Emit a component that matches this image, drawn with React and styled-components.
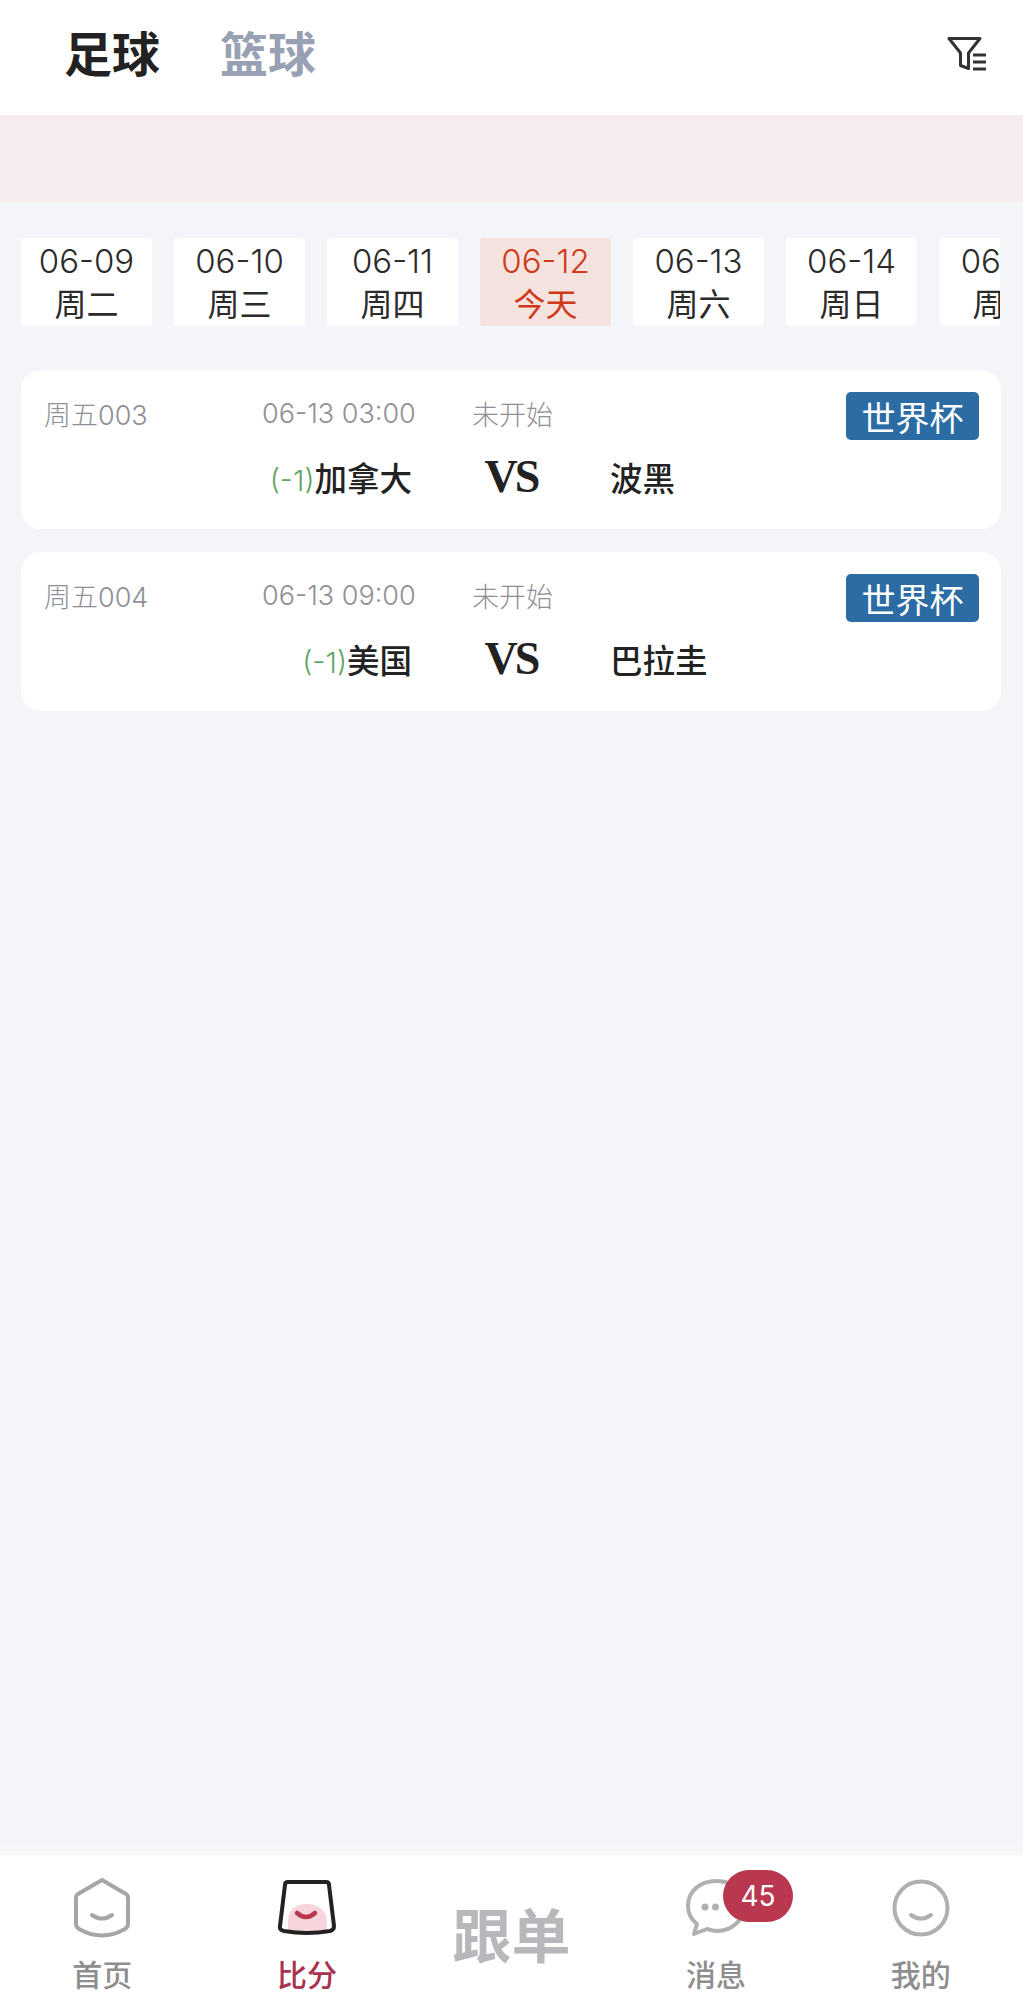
import React from 'react'
import styled, { createGlobalStyle } from 'styled-components'

const GlobalStyle = createGlobalStyle`
  html, body { margin: 0; padding: 0; background: #f3f5f9; }
  * { box-sizing: border-box; }
  body { font-family: "Inter", "Noto Sans CJK SC", sans-serif; }
`

const dates = [
    { day: '06-09', week: '周二' },
    { day: '06-10', week: '周三' },
    { day: '06-11', week: '周四' },
    { day: '06-12', week: '今天', active: true },
    { day: '06-13', week: '周六' },
    { day: '06-14', week: '周日' },
    { day: '06-15', week: '周一' },
]

const matches = [
    { id: '周五003', time: '06-13 03:00', home: '加拿大', away: '波黑' },
    { id: '周五004', time: '06-13 09:00', home: '美国', away: '巴拉圭' },
]

const FilterIcon = () => (
    <svg width="40" height="36" viewBox="0 0 40 36" fill="none" stroke="#333" strokeWidth="3">
        <path d="M2 2.5H33L21.5 17V32.5L13.5 29.5V17Z" strokeLinejoin="round" />
        <path d="M26 19H39M26 26H39M26 33H39" />
    </svg>
)

const HomeIcon = () => (
    <svg width="58" height="62" viewBox="0 0 58 62" fill="none" stroke="#a6a6a6" strokeWidth="4" strokeLinecap="round" strokeLinejoin="round">
        <path d="M29 3L53 17Q55 18 55 21V47Q55 50 52 52Q29 65 6 52Q3 50 3 47V21Q3 18 5 17Z" />
        <path d="M19 38Q29 45 39 38" />
    </svg>
)

const ScoreIcon = () => (
    <svg width="60" height="56" viewBox="0 0 60 56" fill="none">
        <path d="M11 40C11 30 19 24 30 24C41 24 50 30 50 42L50 50Q30 54 11 50Z" fill="#f6d5dc" />
        <path d="M8 5Q8 2 11 2H49Q52 2 52 5L57 46Q57 50 53 51Q30 55 7 51Q2 50 3 46Z" stroke="#222" strokeWidth="4" strokeLinejoin="round" />
        <path d="M20 33Q29 41 38 33" stroke="#b93850" strokeWidth="4.5" strokeLinecap="round" />
    </svg>
)

const ChatIcon = () => (
    <svg width="60" height="58" viewBox="0 0 60 58" fill="none" stroke="#b0b0b0" strokeWidth="4" strokeLinecap="round" strokeLinejoin="round">
        <path d="M31 2C14 2 2 12 2 27C2 35 6 41 11 45L8 55L21 50C24 51 27 52 31 52C46 52 58 41 58 27C58 12 46 2 31 2Z" />
        <circle cx="19" cy="28" r="3.5" fill="#b0b0b0" stroke="none" />
        <circle cx="29.5" cy="28" r="3.5" fill="#b0b0b0" stroke="none" />
    </svg>
)

const MineIcon = () => (
    <svg width="58" height="58" viewBox="0 0 58 58" fill="none" stroke="#b0b0b0" strokeWidth="4" strokeLinecap="round">
        <circle cx="29" cy="29" r="26.5" />
        <path d="M19 36Q29 43 39 36" />
    </svg>
)

const App = () => {
    return (
        <Page>
            <GlobalStyle />
            <Header>
                <SportTab $active>足球</SportTab>
                <SportTab>篮球</SportTab>
                <FilterButton><FilterIcon /></FilterButton>
            </Header>
            <Notice />
            <Content>
                <DateStrip>
                    {dates.map((item) => (
                        <DateCell key={item.day} $active={item.active}>
                            <DayText>{item.day}</DayText>
                            <span>{item.week}</span>
                        </DateCell>
                    ))}
                </DateStrip>
                <MatchList>
                    {matches.map((match) => (
                        <MatchCard key={match.id}>
                            <MetaRow>
                                <MetaText>{match.id}</MetaText>
                                <MetaText>{match.time}</MetaText>
                                <MetaText>未开始</MetaText>
                                <League>世界杯</League>
                            </MetaRow>
                            <TeamRow>
                                <HomeTeam><Handicap>(-1)</Handicap>{match.home}</HomeTeam>
                                <Versus>VS</Versus>
                                <AwayTeam>{match.away}</AwayTeam>
                            </TeamRow>
                        </MatchCard>
                    ))}
                </MatchList>
            </Content>
            <Fade />
            <TabBar>
                <TabItem>
                    <IconSlot><HomeIcon /></IconSlot>
                    <TabLabel>首页</TabLabel>
                </TabItem>
                <TabItem>
                    <IconSlot><ScoreIcon /></IconSlot>
                    <TabLabel $active>比分</TabLabel>
                </TabItem>
                <FollowItem>跟单</FollowItem>
                <TabItem>
                    <IconSlot>
                        <ChatIcon />
                        <Badge>45</Badge>
                    </IconSlot>
                    <TabLabel>消息</TabLabel>
                </TabItem>
                <TabItem>
                    <IconSlot><MineIcon /></IconSlot>
                    <TabLabel>我的</TabLabel>
                </TabItem>
            </TabBar>
        </Page>
    )
}

const Page = styled.div`
    display: flex;
    flex-direction: column;
    width: 1023px;
    height: 2000px;
    overflow: hidden;
    background: #f3f5f9;
`

const Header = styled.div`
    display: flex;
    align-items: center;
    gap: 60px;
    height: 115px;
    padding: 0 36px 5px 64px;
    background: #fff;
`

const SportTab = styled.div`
    font-size: 48px;
    font-weight: 700;
    line-height: 1;
    color: ${(p) => (p.$active ? '#222' : '#98a1b3')};
`

const FilterButton = styled.div`
    display: flex;
    margin-left: auto;
    margin-top: -3px;
`

const Notice = styled.div`
    height: 87px;
    background: #f6ebed;
`

const Content = styled.div`
    flex: 1;
    padding-top: 36px;
`

const DateStrip = styled.div`
    display: flex;
    gap: 22px;
    margin: 0 23px 0 21px;
    overflow: hidden;
`

const DateCell = styled.div`
    display: flex;
    flex-direction: column;
    align-items: center;
    flex: 0 0 131px;
    height: 88px;
    padding-top: 1px;
    border-radius: 3px;
    font-size: 32px;
    line-height: 44px;
    color: ${(p) => (p.$active ? '#d03a1a' : '#2b2b2b')};
    background: ${(p) => (p.$active ? '#f5e3e0' : '#fff')};
`

const DayText = styled.span`
    font-size: 33px;
    font-weight: 300;
`

const MatchList = styled.div`
    display: flex;
    flex-direction: column;
    gap: 23px;
    margin: 44px 22px 0 21px;
`

const MatchCard = styled.div`
    height: 159px;
    padding: 22px 22px 0 23px;
    border-radius: 20px;
    background: #fff;
`

const MetaRow = styled.div`
    display: grid;
    grid-template-columns: 218px 210px 1fr auto;
    align-items: center;
    height: 48px;
`

const MetaText = styled.span`
    padding-bottom: 6px;
    font-size: 27px;
    font-weight: 300;
    color: #8e9095;
`

const League = styled.span`
    display: flex;
    align-items: center;
    justify-content: center;
    width: 133px;
    height: 48px;
    border-radius: 5px;
    font-size: 34px;
    color: #fff;
    background: #2a6ca3;
`

const TeamRow = styled.div`
    display: grid;
    grid-template-columns: 1fr 198px 1fr;
    align-items: center;
    margin: 10px -22px 0 -23px;
`

const HomeTeam = styled.div`
    text-align: right;
    font-size: 32.5px;
    font-weight: 500;
    color: #222;
`

const AwayTeam = styled.div`
    font-size: 32.5px;
    font-weight: 500;
    color: #222;
`

const Handicap = styled.span`
    font-size: 29px;
    font-weight: 300;
    color: #5fa565;
`

const Versus = styled.div`
    text-align: center;
    font-family: "Liberation Serif", serif;
    font-size: 46px;
    font-weight: 700;
    letter-spacing: -3px;
    color: #222;
`

const Fade = styled.div`
    height: 20px;
    background: linear-gradient(#f3f5f9, #f7f8fa);
`

const TabBar = styled.div`
    display: grid;
    grid-template-columns: repeat(5, 1fr);
    height: 145px;
    padding: 22px 0 0;
    background: #fff;
`

const TabItem = styled.div`
    display: flex;
    flex-direction: column;
    align-items: center;
`

const IconSlot = styled.div`
    position: relative;
    display: flex;
    align-items: center;
    justify-content: center;
    height: 62px;
`

const Badge = styled.span`
    position: absolute;
    top: -7px;
    left: 37px;
    display: flex;
    align-items: center;
    justify-content: center;
    width: 70px;
    height: 52px;
    border-radius: 26px;
    font-size: 28px;
    color: #fff;
    background: #b93850;
`

const TabLabel = styled.span`
    margin-top: 18px;
    font-size: 30px;
    font-weight: 500;
    line-height: 36px;
    color: ${(p) => (p.$active ? '#a8324f' : '#8e8e8e')};
`

const FollowItem = styled.div`
    display: flex;
    justify-content: center;
    padding-top: 24px;
    font-size: 59px;
    font-weight: 700;
    line-height: 72px;
    color: #b8b8bc;
`

export default App
